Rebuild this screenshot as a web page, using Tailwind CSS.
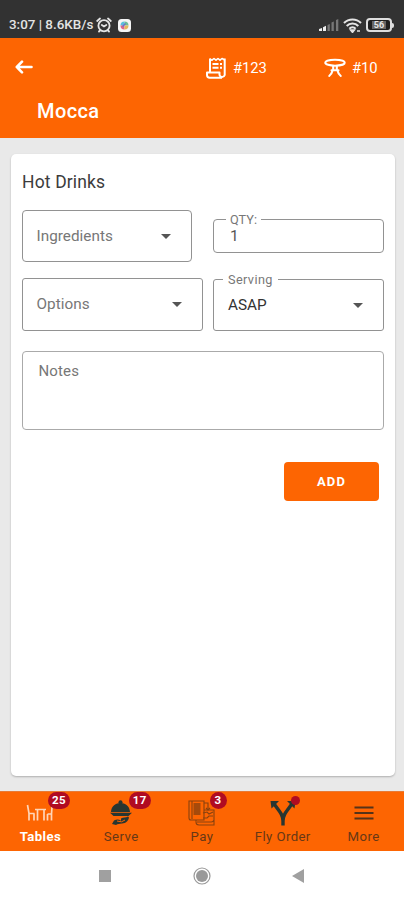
<!DOCTYPE html>
<html lang="en">
<head>
<meta charset="utf-8">
<title>Mocca</title>
<script src="https://cdn.jsdelivr.net/npm/@tailwindcss/browser@4"></script>
</head>
<body class="bg-white">
<div class="flex h-[900px] w-[404px] flex-col overflow-hidden bg-[#e9e9e9] font-[Roboto,sans-serif]">

  <!-- Status bar -->
  <div class="flex h-[38px] shrink-0 items-end justify-between bg-[#323232] pr-[10px] pb-[5px] pl-[9px] text-[#e4e4e4]">
    <div class="flex h-[16px] items-center">
      <span class="w-[85px] text-[13.400px] leading-[16px] font-medium whitespace-nowrap">3:07 | 8.6KB/s</span>
      <svg class="ml-[2px] h-[16px] w-[16px]" viewBox="0 0 16 16" fill="none" stroke="currentColor" stroke-width="1.800" stroke-linecap="round"><circle cx="8" cy="8.7" r="5.600"/><path d="M1.2 4 4 1.5M14.8 4 12 1.5M5.8 8l2.2 1.5L10.3 8M4 13.5l-1 1M12 13.5l1 1"/></svg>
      <svg class="ml-[6px] h-[13px] w-[13px]" viewBox="0 0 13 13"><rect width="13" height="13" rx="3.5" fill="#f5f5f5"/><path d="M6.5 2.5a4 4 0 0 0-4 4h4z" fill="#59bfe0"/><path d="M10.5 6.5a4 4 0 0 0-4-4v4z" fill="#6bbd9b"/><path d="M2.5 6.5a4 4 0 0 0 4 4v-4z" fill="#dc668a"/><path d="M6.5 10.5a4 4 0 0 0 4-4h-4z" fill="#e5b75d"/><path d="m4.5 7.5 3-3" stroke="#6b73cc" stroke-width="1.5"/></svg>
    </div>
    <div class="flex h-[16px] items-center">
      <svg class="h-[14px] w-[20px]" viewBox="0 0 20 14"><path d="M0 13v-2l3-1v3zM4 13V9.3l3-1.5V13z" fill="#eee"/><path d="M8.500 13V7l2.300-1v7zM12.500 13V4.500l2.300-1V13zM17 13V2l2.300-1v12z" fill="#777"/></svg>
      <svg class="ml-[4px] h-[15px] w-[19px]" viewBox="0 0 19 15" fill="none" stroke="currentColor" stroke-width="2.100"><path d="M1 5a12 12 0 0 1 17 0M3.700 7.900a8.200 8.200 0 0 1 11.600 0M6.400 10.700a4.400 4.400 0 0 1 6.200 0"/><path d="M7.500 12 9.500 14.500l2-2.500zM14 13h3" fill="currentColor" stroke-width="1.400"/></svg>
      <div class="ml-[4px] flex h-[14px] w-[26px] items-center justify-center rounded-[4px] border-2 border-[#dedede] bg-[#1f1f1f] text-[9px] leading-none font-bold"><span class="bg-[#666] px-[2px] leading-[8px]">56</span></div>
      <div class="h-[5px] w-[2px] rounded-r bg-[#dedede]"></div>
    </div>
  </div>

  <!-- App bar -->
  <header class="h-[100px] shrink-0 bg-[#fd6502] text-white">
    <div class="flex h-[57px] items-center pt-[3px]">
      <svg class="mb-[3px] ml-[15px] h-[14px] w-[18px]" viewBox="0 0 18 14" fill="none" stroke="#fff" stroke-width="2.600" stroke-linecap="round" stroke-linejoin="round"><path d="M16.500 7H1.800M7 1.700 1.800 7 7 12.300"/></svg>
      <svg class="ml-[173px] h-[22px] w-[20px]" viewBox="0 0 20 22" fill="none" stroke="#fff" stroke-width="2" stroke-linejoin="round"><path d="M4 15V1.500M18.700 1.500V18a2.700 2.700 0 0 1-5.200 0v-2.500H1V18a2.700 2.700 0 0 0 2.700 2.700H16"/><path d="m4 2 2 1.200 2-1.700 2 1.700 2-1.700 2 1.700 2-1.700L18.700 3" stroke-width="1.600"/><path d="M6.500 7h6M14 7h2M6.500 10.800h6M14 10.800h2" stroke-width="2"/></svg>
      <span class="ml-[7px] w-[36px] text-[14.800px] leading-[20px] tracking-[-0.1px]">#123</span>
      <svg class="ml-[55px] h-[20px] w-[22px]" viewBox="0 0 22 20" fill="none" stroke="#fff" stroke-width="2.100" stroke-linecap="round" stroke-linejoin="round"><ellipse cx="11" cy="4.700" rx="9.700" ry="3"/><path d="M9.200 8v4M12.800 8v4M7.500 12.200h7M8.500 12.500c-.5 2.500-1.500 4.200-3.300 5.500M13.500 12.500c.5 2.500 1.500 4.200 3.300 5.500"/></svg>
      <span class="ml-[6px] text-[14.800px] leading-[20px] tracking-[-0.1px]">#10</span>
    </div>
    <h1 class="pl-[37px] text-[20px] leading-[32px] font-medium tracking-[0.4px]">Mocca</h1>
  </header>

  <!-- Order item -->
  <main class="flex-1 px-[11px] pt-[16px] pb-[15px]">
    <section class="flex h-full w-[384px] flex-col rounded-[5px] bg-white px-[11px] pt-[16px] shadow-[0_1px_2px_rgba(0,0,0,0.25)]">
      <h2 class="h-[40px] text-[17.500px] leading-[24px] tracking-[0.15px] text-[#3c3c3c]">Hot Drinks</h2>
      <div class="flex h-[52px] justify-between">
        <div class="flex w-[170px] items-center justify-between rounded-[4px] border border-[#929292] pr-[20px] pl-[13.500px] text-[15.300px] tracking-[0.02px] text-[#777]"><span>Ingredients</span><svg class="h-[5px] w-[10px]" viewBox="0 0 10 5"><path d="M0 0h10L5 5z" fill="#555"/></svg></div>
        <fieldset class="mt-[1px] h-[42px] w-[171px] rounded-[4px] border border-[#929292] pl-[12px]">
          <legend class="h-[16px] px-[4px] text-[12.700px] leading-[18px] tracking-[0.1px] text-[#777]">QTY:</legend>
          <div class="-mt-[1px] pl-[4px] text-[15.500px] leading-[20px] text-[#555]">1</div>
        </fieldset>
      </div>
      <div class="mt-[9px] flex h-[60px] items-end justify-between">
        <div class="flex h-[53px] w-[181px] items-center justify-between rounded-[3px] border border-[#929292] pr-[20px] pl-[13.500px] text-[15.300px] tracking-[0.02px] text-[#777]"><span>Options</span><svg class="h-[5px] w-[10px]" viewBox="0 0 10 5"><path d="M0 0h10L5 5z" fill="#555"/></svg></div>
        <fieldset class="h-[60px] w-[171px] rounded-[3px] border border-[#929292] pr-[20px] pl-[9px]">
          <legend class="h-[16px] px-[5px] text-[12.700px] leading-[18px] tracking-[0.4px] text-[#777]">Serving</legend>
          <div class="mt-[7px] flex items-center justify-between pl-[5px] text-[15.300px] leading-[22px] text-[#333]"><span>ASAP</span><svg class="h-[5px] w-[10px]" viewBox="0 0 10 5"><path d="M0 0h10L5 5z" fill="#555"/></svg></div>
        </fieldset>
      </div>
      <div class="mt-[20px] h-[79px] rounded-[4px] border border-[#aaa] px-[15.500px] pt-[9px] text-[15px] leading-[20px] tracking-[0.15px] text-[#777]">Notes</div>
      <button class="mt-[32px] mr-[5px] h-[39px] w-[95px] self-end rounded-[4px] bg-[#fd6502] text-[13px] font-bold tracking-[1.200px] text-white">ADD</button>
    </section>
  </main>

  <!-- Bottom navigation -->
  <nav class="grid h-[60px] shrink-0 grid-cols-5 border-t border-[#e77a35] bg-[#fd6502] text-center text-[13.200px] tracking-[0.4px] text-[#673816]">
    <div class="relative flex flex-col items-center pt-[8px] font-bold text-white">
      <svg class="h-[26px] w-[28px]" viewBox="0 0 28 26" fill="none" stroke="#ffd5b8" stroke-width="1.700"><path d="M1.500 5 3 13.500h5.500M3 13v7.500M8 13.500v7M9 9.500h11M11.500 9.500v11M18 9.500v11M26 7l-.5 7H21.500M21.500 14v6.500M25.500 14v6.500"/></svg>
      <span class="mt-[2px] leading-[18px]">Tables</span>
      <span class="absolute top-0 left-[48px] h-[17px] w-[22px] rounded-full bg-[#b00b22] text-[11.500px] leading-[17px]">25</span>
    </div>
    <div class="relative flex flex-col items-center pt-[8px]">
      <svg class="h-[26px] w-[24px]" viewBox="0 0 24 26" fill="#283631"><circle cx="11.500" cy="2.300" r="2"/><path d="M2 12C2.500 0 20.500 0 21 12zM1 12.800h22L19.500 16h-15z"/><path d="M12 18.500c2-1.500 5-.5 7-2l1 1c-1 4-3 5.500-7 6-3 .2-4 .5-6 1.500l-4-1 2-3.500c3-1.500 5-1 7 .2z"/><path d="m8 21 4.500.8 3.500-1.800" fill="none" stroke="#fd6502" stroke-width="1"/></svg>
      <span class="mt-[2px] leading-[18px]">Serve</span>
      <span class="absolute top-0 left-[48px] h-[17px] w-[22px] rounded-full bg-[#b00b22] text-[11.500px] leading-[17px] font-bold text-white">17</span>
    </div>
    <div class="relative flex flex-col items-center pt-[8px]">
      <svg class="h-[26px] w-[28px]" viewBox="0 0 28 26" fill="none" stroke="#89420f" stroke-width="1.100"><path d="M1 1h15v19H3a2 2 0 0 1-2-2zM4 1v18M16 3h4v6M16 10h10v15H11a3 3 0 0 1-3-3v-2M9 22h14a3 3 0 0 0 3-2"/><path d="M5.500 4h7M5.500 6h7M5.500 8h7M5.500 10h7M5.500 12h7M5.500 14h7" stroke-width="1.300"/><path d="m15 13 4-1 2 2 4-2M15 18h4l2-2h4M18 8l2 2 2-2" /></svg>
      <span class="mt-[2px] leading-[18px]">Pay</span>
      <span class="absolute top-0 left-[48px] h-[17px] w-[17px] rounded-full bg-[#b00b22] text-[11.500px] leading-[17px] font-bold text-white">3</span>
    </div>
    <div class="relative flex flex-col items-center pt-[8px]">
      <svg class="h-[26px] w-[26px]" viewBox="0 0 26 26"><path d="M13 25.500V21c0-6-3-9-8.500-16.500M13 21c0-6 3-9 8.500-16.500" fill="none" stroke="#283631" stroke-width="3.400"/><path d="M.5 1H9L1.500 8.500zM25.500 1H17l7.500 7.500z" fill="#283631"/></svg>
      <span class="mt-[2px] leading-[18px] whitespace-nowrap">Fly Order</span>
      <span class="absolute top-[4px] left-[49px] h-[9px] w-[9px] rounded-full bg-[#b00b22]"></span>
    </div>
    <div class="flex flex-col items-center pt-[8px]">
      <svg class="h-[26px] w-[20px]" viewBox="0 0 20 26" stroke="#553319" stroke-width="2"><path d="M.5 7.500h19M.5 13h19M.5 18.500h19"/></svg>
      <span class="mt-[2px] leading-[18px]">More</span>
    </div>
  </nav>

  <!-- System navigation -->
  <div class="flex h-[49px] shrink-0 items-center bg-white pt-[1px]">
    <div class="ml-[99px] h-[12px] w-[12px] bg-[#a0a0a0]"></div>
    <svg class="ml-[82px] h-[18px] w-[18px]" viewBox="0 0 18 18"><circle cx="9" cy="9" r="8" fill="none" stroke="#999" stroke-width="1.200"/><circle cx="9" cy="9" r="6" fill="#999"/></svg>
    <svg class="ml-[81px] h-[14px] w-[12px]" viewBox="0 0 12 14"><path d="M12 0v14L0 7z" fill="#a0a0a0"/></svg>
  </div>
</div>
</body>
</html>
